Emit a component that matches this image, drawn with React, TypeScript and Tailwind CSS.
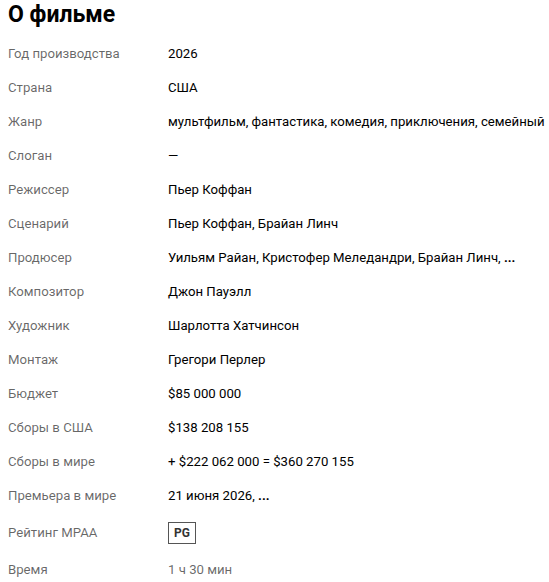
const rows: { label: string; value: React.ReactNode; tall?: boolean; muted?: boolean }[] = [
  { label: "Год производства", value: "2026" },
  { label: "Страна", value: "США" },
  { label: "Жанр", value: "мультфильм, фантастика, комедия, приключения, семейный" },
  { label: "Слоган", value: "—" },
  { label: "Режиссер", value: "Пьер Коффан" },
  { label: "Сценарий", value: "Пьер Коффан, Брайан Линч" },
  {
    label: "Продюсер",
    value: (
      <>
        Уильям Райан, Кристофер Меледандри, Брайан Линч, <span className="font-bold">...</span>
      </>
    ),
  },
  { label: "Композитор", value: "Джон Пауэлл" },
  { label: "Художник", value: "Шарлотта Хатчинсон" },
  { label: "Монтаж", value: "Грегори Перлер" },
  { label: "Бюджет", value: "$85 000 000" },
  { label: "Сборы в США", value: "$138 208 155" },
  { label: "Сборы в мире", value: "+ $222 062 000 = $360 270 155" },
  {
    label: "Премьера в мире",
    value: (
      <>
        21 июня 2026, <span className="font-bold">...</span>
      </>
    ),
  },
  {
    label: "Рейтинг MPAA",
    tall: true,
    value: (
      <span className="inline-flex h-[22px] items-center border border-[#555] px-[5px] text-[12px] font-bold text-[#333]">
        PG
      </span>
    ),
  },
  { label: "Время", value: "1 ч 30 мин", muted: true },
];

export default function App() {
  return (
    <main className="min-h-screen bg-white px-2 font-['Roboto',sans-serif]">
      <h2 className="h-[37px] pt-[1px] text-[23px] font-bold leading-[28px] text-black">О фильме</h2>

      <div className="flex flex-col">
        {rows.map((row) => (
          <div
            key={row.label}
            className={`flex items-center text-[13.2px] leading-4 ${row.tall ? "h-10" : "h-[34px]"}`}
          >
            <div className="w-40 shrink-0 text-black/60">{row.label}</div>
            <div className={`whitespace-nowrap ${row.muted ? "text-black/60" : "text-black"}`}>
              {row.value}
            </div>
          </div>
        ))}
      </div>
    </main>
  );
}
